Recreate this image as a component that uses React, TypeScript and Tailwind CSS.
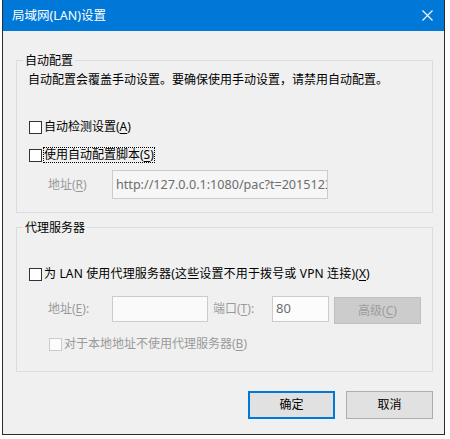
import React from "react";

const ui = "font-['Segoe_UI','Noto_Sans','Noto_Sans_CJK_SC',sans-serif]";

function Box({ checked = false, disabled = false }: { checked?: boolean; disabled?: boolean }) {
  return (
    <span
      className={
        "inline-block h-[13px] w-[13px] shrink-0 border " +
        (disabled ? "border-[#cccccc] bg-[#fcfcfc]" : "border-[#333333] bg-white")
      }
    >
      {checked ? "✓" : null}
    </span>
  );
}

function Group({
  title,
  height,
  className = "",
  children
}: {
  title: string;
  height: string;
  className?: string;
  children: React.ReactNode;
}) {
  return (
    <div className={"relative ml-[13px] w-[417px] border border-[#dcdcdc] " + height + " " + className}>
      <span className="absolute -top-[8px] left-[6px] bg-[#f0f0f0] px-[2px] text-[12px] leading-[16px] text-black">
        {title}
      </span>
      {children}
    </div>
  );
}

export default function App() {
  return (
    <div className={"h-[439px] w-[450px] bg-white " + ui}>
      <div className="ml-[2px] flex h-[435px] w-[443px] flex-col border-x border-b border-[#2b2b2b] bg-[#f0f0f0]">
        {/* title bar */}
        <div className="flex h-[31px] shrink-0 items-center justify-between bg-[#0078d7] pl-[9px] pr-[10px]">
          <span className="text-[12.5px] leading-[16px] text-white">局域网(LAN)设置</span>
          <svg width="11" height="11" viewBox="0 0 11 11" className="mr-[1px]">
            <path d="M0.5 0.5 L10.5 10.5 M10.5 0.5 L0.5 10.5" stroke="#ffffff" strokeWidth="1.1" fill="none" />
          </svg>
        </div>

        {/* automatic configuration */}
        <Group title="自动配置" height="h-[153px]" className="mt-[29px]">
          <div className="flex flex-col pl-[11px] text-[12px] leading-[16px] text-black">
            <p className="mt-[11px] h-[16px]">自动配置会覆盖手动设置。要确保使用手动设置，请禁用自动配置。</p>
            <label className="mt-[31px] flex h-[16px] items-center gap-[2px] pl-[1px]">
              <Box />
              <span>
                自动检测设置(<u className="underline-offset-2">A</u>)
              </span>
            </label>
            <label className="mt-[12px] flex h-[16px] items-center gap-[1px] pl-[1px]">
              <Box />
              <span className="border border-dotted border-black px-[0px] leading-[14px]">
                使用自动配置脚本(<u className="underline-offset-2">S</u>)
              </span>
            </label>
            <div className="mt-[7px] flex items-center pl-[20px]">
              <span className="w-[64px] text-[#9a9a9a]">
                地址(<u className="underline-offset-2">R</u>)
              </span>
              <div className="flex h-[29px] w-[216px] items-center overflow-hidden whitespace-nowrap border border-[#cccccc] bg-[#f6f6f6] pl-[3px] text-[12.6px] text-[#6d6d6d]">
                http://127.0.0.1:1080/pac?t=20151230
              </div>
            </div>
          </div>
        </Group>

        {/* proxy server */}
        <Group title="代理服务器" height="h-[145px]" className="mt-[14px]">
          <div className="flex flex-col pl-[12px] text-[12px] leading-[16px] text-black">
            <label className="mt-[38px] flex h-[16px] items-center gap-[2px]">
              <Box />
              <span className="tracking-[0.15px]">
                为 LAN 使用代理服务器(这些设置不用于拨号或 VPN 连接)(<u className="underline-offset-2">X</u>)
              </span>
            </label>
            <div className="mt-[14px] flex items-start pl-[19px] text-[#9a9a9a]">
              <span className="mt-[5px] w-[64px]">
                地址(<u className="underline-offset-2">E</u>):
              </span>
              <div className="h-[26px] w-[96px] border border-[#cccccc] bg-[#fafafa]" />
              <span className="ml-[5px] mt-[5px] w-[59px]">
                端口(<u className="underline-offset-2">T</u>):
              </span>
              <div className="h-[26px] w-[57px] border border-[#cccccc] bg-[#fcfcfc] pl-[3px] pt-[3px] text-[13px] leading-[16px] text-[#6d6d6d]">
                80
              </div>
              <div className="ml-[5px] mt-[1px] flex h-[27px] w-[87px] items-center justify-center border border-[#bfbfbf] bg-[#cccccc] text-[#9c9c9c]">
                高级(<u className="underline-offset-2">C</u>)
              </div>
            </div>
            <label className="mt-[12px] flex h-[16px] items-center gap-[2px] pl-[20px] text-[#9a9a9a]">
              <Box disabled />
              <span>
                对于本地地址不使用代理服务器(<u className="underline-offset-2">B</u>)
              </span>
            </label>
          </div>
        </Group>

        {/* buttons */}
        <div className="mr-[11px] mt-[19px] flex justify-end gap-[11px] text-[12px] text-black">
          <button className="flex h-[28px] w-[87px] items-center justify-center border-2 border-[#0078d7] bg-[#e1e1e1]">
            确定
          </button>
          <button className="flex h-[28px] w-[87px] items-center justify-center border border-[#adadad] bg-[#e1e1e1]">
            取消
          </button>
        </div>
      </div>
    </div>
  );
}
